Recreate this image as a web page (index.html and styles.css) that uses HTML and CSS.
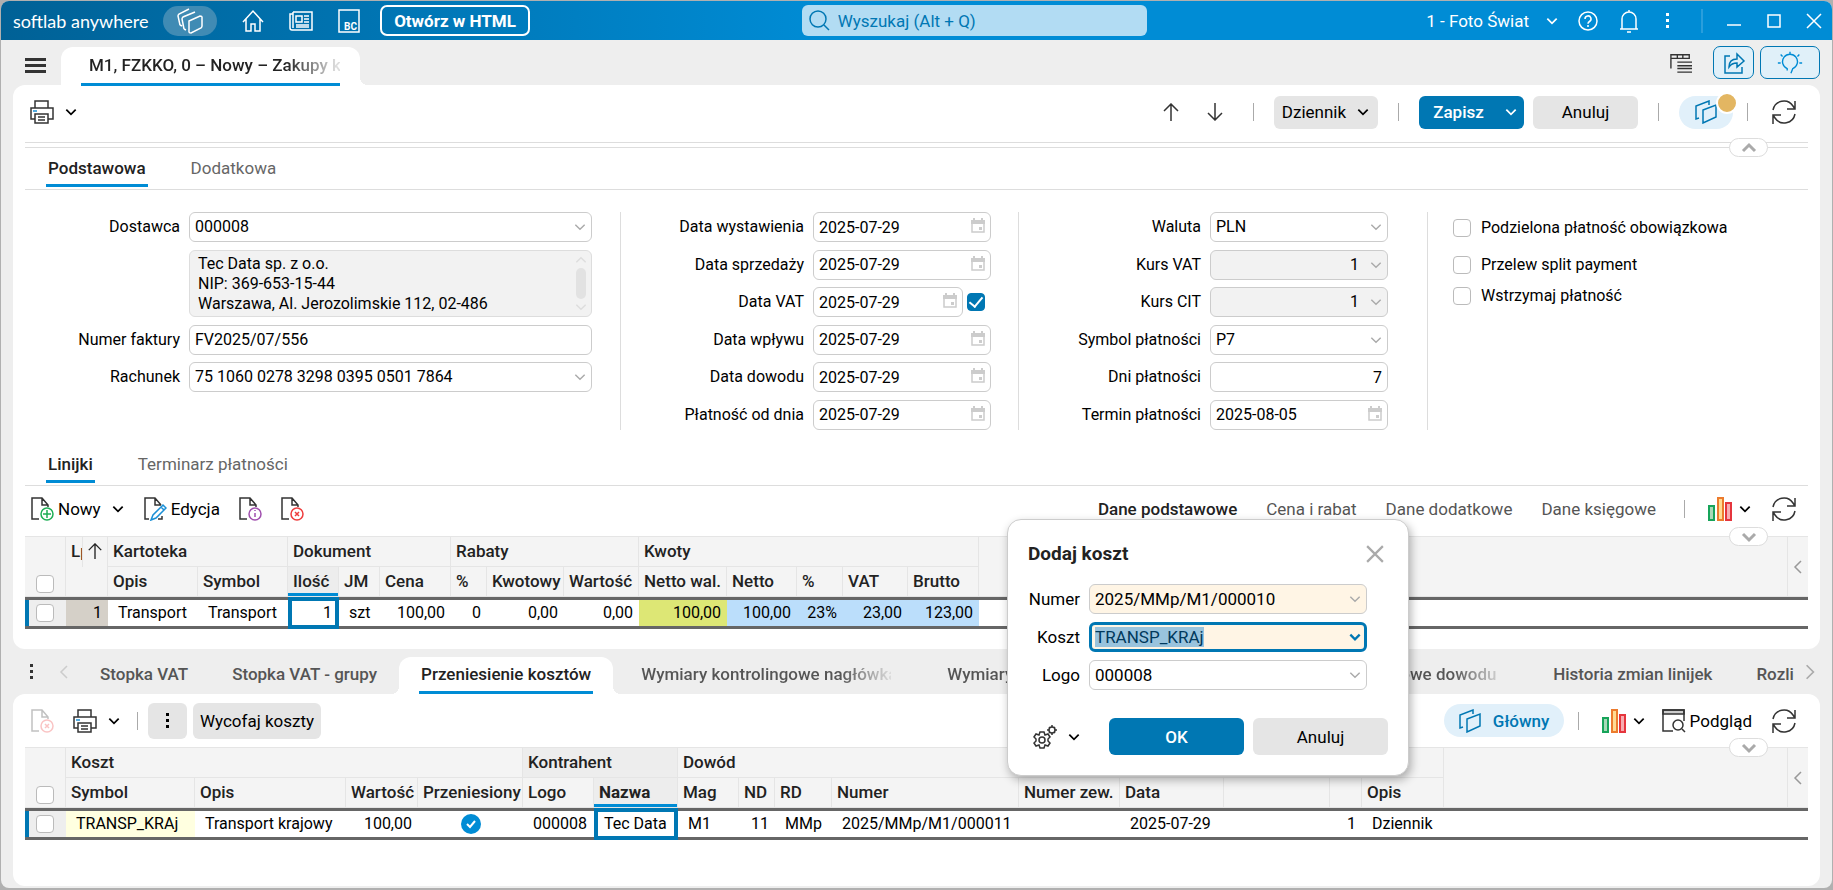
FILE: index.html
```
<!DOCTYPE html>
<html lang="pl">
<head>
  <meta charset="UTF-8" />
  <meta name="viewport" content="width=device-width, initial-scale=1.0" />
  <title>softlab anywhere</title>
  <link rel="stylesheet" href="styles.css">
</head>
<body>
  <!-- Icon set -->
  <svg class="sprite" aria-hidden="true">
    <symbol id="i-chevron" viewBox="0 0 12 12"><path d="M2 4l4 4 4-4" /></symbol>
    <symbol id="i-left" viewBox="0 0 10 16"><path d="M8 2L2 8l6 6" /></symbol>
    <symbol id="i-home" viewBox="0 0 24 24"><path d="M2 13L12 2l10 11M5 10v12h5v-7h4v7h5V10" /></symbol>
    <symbol id="i-news" viewBox="0 0 24 24"><path d="M4 3h19v18H3a2 2 0 0 1-2-2V5h3M4 3v16M7 7h6v6H7zM15 7h5M15 10h5M15 13h5M7 16h13M7 18h13" /></symbol>
    <symbol id="i-file" viewBox="0 0 24 24"><path d="M2 1h20v22H2z" /></symbol>
    <symbol id="i-stack" viewBox="0 0 26 26"><path d="M3 17l-2-9c0-1 0-1 1-2L12 1M7 21L5 11c0-1 0-1 1-2l12-5M12 13l11-5c1 0 2 0 2 1v9c0 1 0 1-1 2l-10 5c-1 0-2 0-2-1zM3 17l2 1M7 21l2 1" /></symbol>
    <symbol id="i-panes" viewBox="0 0 24 24"><path d="M5 18l-3 1V6l13-5v4M9 10l13-5v12L9 23z" /></symbol>
    <symbol id="i-search" viewBox="0 0 22 22"><circle cx="10" cy="9" r="8" /><path d="M16 15l5 5" /></symbol>
    <symbol id="i-help" viewBox="0 0 22 22"><circle cx="11" cy="11" r="9" /><path d="M8 9a3 3 0 1 1 4.500 2.500c-1 .6-1.500 1-1.500 2.200M11 15v2" /></symbol>
    <symbol id="i-bell" viewBox="0 0 22 24"><path d="M2 20h18M4 20V10a7 7 0 0 1 14 0v10M11 3V1M9 23h4" /></symbol>
    <symbol id="i-dots" viewBox="0 0 6 18"><path d="M1 1h3v3H1zM1 7h3v3H1zM1 13h3v3H1z" fill="currentColor" stroke="none" /></symbol>
    <symbol id="i-min" viewBox="0 0 16 16"><path d="M1 12h14" /></symbol>
    <symbol id="i-max" viewBox="0 0 16 16"><path d="M2 2h12v12H2z" /></symbol>
    <symbol id="i-close" viewBox="0 0 16 16"><path d="M1 1l14 14M15 1L1 15" /></symbol>
    <symbol id="i-list" viewBox="0 0 24 22"><path d="M1 17V2h20v4H1M8 2v4M14 2v4M8 10h16M8 14h16M8 17h16M8 21h16" /></symbol>
    <symbol id="i-share" viewBox="0 0 24 24"><path d="M8 5H3v17h17v-6M7 16c0-6 3-8 8-8V3l7 7-7 6v-4c-4 0-6 1-8 4z" /></symbol>
    <symbol id="i-bulb" viewBox="0 0 30 26"><path d="M12 21v-2a8 8 0 1 1 6 0l-2 5M15 1v3M5 4l2 2M25 4l-2 2M2 13h3M25 13h3" /></symbol>
    <symbol id="i-print" viewBox="0 0 24 24"><path d="M5 8V1h13v7M5 19H1V8h22v11h-5M5 14h13v9H5zM8 17h7M8 20h7" /><path class="blue" d="M3 11h4" /></symbol>
    <symbol id="i-up" viewBox="0 0 16 18"><path d="M8 18V1M1 8l7-7 7 7" /></symbol>
    <symbol id="i-down" viewBox="0 0 16 18"><path d="M8 0v17M1 10l7 7 7-7" /></symbol>
    <symbol id="i-refresh" viewBox="0 0 24 24"><path d="M1 10A11 11 0 0 1 21 6l2 3M23 1v8h-8M23 14A11 11 0 0 1 3 18l-2-3M1 24v-9h8" /></symbol>
    <symbol id="i-cal" viewBox="0 0 16 16"><path d="M2 5h12v9H2z" /><path d="M1 2h14v4H1zM3 0h2v3H3zM11 0h2v3h-2zM9 9h3v3H9z" fill="currentColor" stroke="none" /></symbol>
    <symbol id="i-page" viewBox="0 0 24 24"><path d="M9 22H2V1h10l6 7v2M12 1v7h6" /></symbol>
    <symbol id="i-new" viewBox="0 0 24 24"><use href="#i-page" /><g class="green"><circle cx="17" cy="17" r="6" /><path d="M17 13v8M13 17h8" /></g></symbol>
    <symbol id="i-info" viewBox="0 0 24 24"><use href="#i-page" /><g class="purple"><circle cx="17" cy="17" r="6" /><path d="M17 16v4M17 13v1" /></g></symbol>
    <symbol id="i-del" viewBox="0 0 24 24"><use href="#i-page" /><g class="red"><circle cx="17" cy="17" r="6" /><path d="M15 15l4 4M19 15l-4 4" /></g></symbol>
    <symbol id="i-edit" viewBox="0 0 24 24"><path d="M6 22H2V1h10l6 7M12 1v7h6M15 22h4v-3" /><path class="blue" d="M8 23l2-5L20 8l3 3-10 10zM18 10l3 3" /></symbol>
    <symbol id="i-chart" viewBox="0 0 24 24">
      <path d="M1 9h5v14H1z" fill="#a8d9b8" stroke="#17a45a" /><path d="M10 1h5v22h-5z" fill="#ffdb93" stroke="#ec7b2d" /><path d="M18 6h5v17h-5z" fill="#f7acb0" stroke="#e5353d" />
    </symbol>
    <symbol id="i-preview" viewBox="0 0 24 24"><path d="M1 1h21v4H1z" fill="#ccc" /><path d="M22 12V1H1v21h10M20 20l3 3" /><circle cx="16" cy="16" r="5" /></symbol>
    <symbol id="i-gears" viewBox="0 0 24 24">
      <circle cx="9" cy="15" r="3" /><path d="M7 7h4l1 3 3-1 2 3-2 2v2l2 2-2 3-3-1-1 3H7l-1-3-3 1-2-3 2-2v-2l-2-2 2-3 3 1z" />
      <circle cx="19" cy="5" r="3" /><path d="M19 0v2M19 8v2M14 5h2M22 5h2M16 2l1 1M21 7l1 1M22 2l-1 1M17 7l-1 1" />
    </symbol>
  </svg>

  <div class="window">
    <header class="titlebar">
      <div class="title-left">
        <span class="brand">softlab anywhere</span>
        <button class="stack-btn" aria-label="Moduły"><svg class="icon i26"><use href="#i-stack" /></svg></button>
        <button class="title-btn" aria-label="Start"><svg class="icon i24"><use href="#i-home" /></svg></button>
        <button class="title-btn" aria-label="Aktualności"><svg class="icon i24"><use href="#i-news" /></svg></button>
        <button class="title-btn bc" aria-label="BC"><svg class="icon i24"><use href="#i-file" /></svg><span>BC</span></button>
        <button class="html-btn">Otwórz w HTML</button>
      </div>
      <div class="search">
        <svg class="icon i22"><use href="#i-search" /></svg>
        <input type="text" aria-label="Wyszukaj" placeholder="Wyszukaj (Alt + Q)">
      </div>
      <div class="title-right">
        <button class="company">1 - Foto Świat <svg class="icon i14 thick"><use href="#i-chevron" /></svg></button>
        <button aria-label="Pomoc"><svg class="icon i22"><use href="#i-help" /></svg></button>
        <button aria-label="Powiadomienia"><svg class="icon i24"><use href="#i-bell" /></svg></button>
        <button class="more" aria-label="Więcej"><svg class="icon dots"><use href="#i-dots" /></svg></button>
        <span class="title-sep"></span>
        <button aria-label="Minimalizuj"><svg class="icon i16"><use href="#i-min" /></svg></button>
        <button aria-label="Maksymalizuj"><svg class="icon i16"><use href="#i-max" /></svg></button>
        <button aria-label="Zamknij"><svg class="icon i16"><use href="#i-close" /></svg></button>
      </div>
    </header>

    <nav class="docbar">
      <button class="menu-btn" aria-label="Menu"><span></span><span></span><span></span></button>
      <a class="doc-tab" href="#dokument"><span class="fade">M1, FZKKO, 0 – Nowy – Zakupy k</span></a>
      <div class="docbar-right">
        <button class="list-btn" aria-label="Lista"><svg class="icon i22"><use href="#i-list" /></svg></button>
        <button class="outline-btn" aria-label="Udostępnij"><svg class="icon i24"><use href="#i-share" /></svg></button>
        <button class="outline-btn wide" aria-label="Podpowiedzi"><svg class="icon i28"><use href="#i-bulb" /></svg></button>
      </div>
    </nav>

    <main class="panel" id="dokument">
      <div class="toolbar main-tools">
        <button class="tool" aria-label="Drukuj"><svg class="icon i24"><use href="#i-print" /></svg><svg class="icon i14 thick"><use href="#i-chevron" /></svg></button>
        <div class="right">
          <div class="arrows">
            <button aria-label="Poprzedni"><svg class="icon i18"><use href="#i-up" /></svg></button>
            <button aria-label="Następny"><svg class="icon i18"><use href="#i-down" /></svg></button>
          </div>
          <span class="sep"></span>
          <button class="btn journal">Dziennik <svg class="icon i14 thick"><use href="#i-chevron" /></svg></button>
          <span class="sep"></span>
          <div class="save-group">
            <button class="btn primary">Zapisz <svg class="icon i14 thick"><use href="#i-chevron" /></svg></button>
            <button class="btn">Anuluj</button>
          </div>
          <span class="sep"></span>
          <button class="pill badge" aria-label="Widok"><svg class="icon i24"><use href="#i-panes" /></svg></button>
          <span class="sep"></span>
          <button class="refresh" aria-label="Odśwież"><svg class="icon i24"><use href="#i-refresh" /></svg></button>
        </div>
      </div>
      <div class="divider"><button class="fold up" aria-label="Zwiń"><svg class="icon i18"><use href="#i-chevron" /></svg></button></div>

      <nav class="tabs">
        <a class="tab active" href="#podstawowa">Podstawowa</a>
        <a class="tab" href="#dodatkowa">Dodatkowa</a>
      </nav>

      <form class="form" id="podstawowa">
        <div class="fields supplier">
          <label for="dostawca">Dostawca</label>
          <div class="field"><select id="dostawca"><option>000008</option></select><svg class="icon i14"><use href="#i-chevron" /></svg></div>
          <label class="address-label" for="adres"></label>
          <div class="address field">
            <textarea id="adres" aria-label="Adres dostawcy" readonly>Tec Data sp. z o.o.
NIP: 369-653-15-44
Warszawa, Al. Jerozolimskie 112, 02-486</textarea>
            <div class="scroll"><svg class="icon i14 flip"><use href="#i-chevron" /></svg><span></span><svg class="icon i14"><use href="#i-chevron" /></svg></div>
          </div>
          <label for="faktura">Numer faktury</label>
          <div class="field"><input type="text" id="faktura" value="FV2025/07/556"></div>
          <label for="rachunek">Rachunek</label>
          <div class="field"><select id="rachunek"><option>75 1060 0278 3298 0395 0501 7864</option></select><svg class="icon i14"><use href="#i-chevron" /></svg></div>
        </div>

        <div class="fields dates">
          <label for="wystawienie">Data wystawienia</label>
          <div class="field"><input type="text" id="wystawienie" value="2025-07-29"><svg class="icon i16"><use href="#i-cal" /></svg></div>
          <label for="sprzedaz">Data sprzedaży</label>
          <div class="field"><input type="text" id="sprzedaz" value="2025-07-29"><svg class="icon i16"><use href="#i-cal" /></svg></div>
          <label for="vat">Data VAT</label>
          <div class="with-check">
            <div class="field"><input type="text" id="vat" value="2025-07-29"><svg class="icon i16"><use href="#i-cal" /></svg></div>
            <input type="checkbox" class="check" aria-label="Data VAT" checked>
          </div>
          <label for="wplyw">Data wpływu</label>
          <div class="field"><input type="text" id="wplyw" value="2025-07-29"><svg class="icon i16"><use href="#i-cal" /></svg></div>
          <label for="dowod">Data dowodu</label>
          <div class="field"><input type="text" id="dowod" value="2025-07-29"><svg class="icon i16"><use href="#i-cal" /></svg></div>
          <label for="oddnia">Płatność od dnia</label>
          <div class="field"><input type="text" id="oddnia" value="2025-07-29"><svg class="icon i16"><use href="#i-cal" /></svg></div>
        </div>

        <div class="fields payment">
          <label for="waluta">Waluta</label>
          <div class="field"><select id="waluta"><option>PLN</option></select><svg class="icon i14"><use href="#i-chevron" /></svg></div>
          <label for="kursvat">Kurs VAT</label>
          <div class="field"><select id="kursvat" class="num" disabled><option>1</option></select><svg class="icon i14"><use href="#i-chevron" /></svg></div>
          <label for="kurscit">Kurs CIT</label>
          <div class="field"><select id="kurscit" class="num" disabled><option>1</option></select><svg class="icon i14"><use href="#i-chevron" /></svg></div>
          <label for="symbol">Symbol płatności</label>
          <div class="field"><select id="symbol"><option>P7</option></select><svg class="icon i14"><use href="#i-chevron" /></svg></div>
          <label for="dni">Dni płatności</label>
          <div class="field"><input type="text" id="dni" class="num" value="7"></div>
          <label for="termin">Termin płatności</label>
          <div class="field"><input type="text" id="termin" value="2025-08-05"><svg class="icon i16"><use href="#i-cal" /></svg></div>
        </div>

        <div class="options">
          <label class="first"><input type="checkbox" class="check"> Podzielona płatność obowiązkowa</label>
          <label><input type="checkbox" class="check"> Przelew split payment</label>
          <label><input type="checkbox" class="check"> Wstrzymaj płatność</label>
        </div>
      </form>

      <nav class="tabs lines-tabs">
        <a class="tab active" href="#linijki">Linijki</a>
        <a class="tab" href="#terminarz">Terminarz płatności</a>
      </nav>

      <div class="toolbar line-tools" id="linijki">
        <button class="tool"><svg class="icon i24"><use href="#i-new" /></svg>Nowy<svg class="icon i14 thick"><use href="#i-chevron" /></svg></button>
        <button class="tool"><svg class="icon i24"><use href="#i-edit" /></svg>Edycja</button>
        <button class="tool" aria-label="Informacje"><svg class="icon i24"><use href="#i-info" /></svg></button>
        <button class="tool" aria-label="Usuń"><svg class="icon i24"><use href="#i-del" /></svg></button>
        <div class="right">
          <div class="views">
            <a class="active" href="#podstawowe">Dane podstawowe</a>
            <a href="#cena">Cena i rabat</a>
            <a href="#dodatkowe">Dane dodatkowe</a>
            <a href="#ksiegowe">Dane księgowe</a>
          </div>
          <span class="sep"></span>
          <button class="tool tight" aria-label="Wykres"><svg class="icon i24 chart"><use href="#i-chart" /></svg><svg class="icon i14 thick"><use href="#i-chevron" /></svg></button>
          <button class="refresh" aria-label="Odśwież"><svg class="icon i24"><use href="#i-refresh" /></svg></button>
        </div>
      </div>

      <div class="grid">
        <button class="fold" aria-label="Rozwiń"><svg class="icon i18"><use href="#i-chevron" /></svg></button>
        <table class="lines">
          <colgroup>
            <col class="c-check"><col class="c-lp"><col class="c-sort"><col class="c-opis"><col class="c-opis"><col class="c-ilosc"><col class="c-jm"><col class="c-cena"><col class="c-pct"><col class="c-kwot"><col class="c-wart"><col class="c-nwal"><col class="c-netto"><col class="c-stawka"><col class="c-vat"><col class="c-brutto"><col><col class="c-end">
          </colgroup>
          <thead>
            <tr>
              <th rowspan="2" class="pick"><input type="checkbox" class="check" aria-label="Zaznacz wszystkie"></th>
              <th class="lp">Lp</th>
              <th class="sort"><svg class="icon i16"><use href="#i-up" /></svg></th>
              <th colspan="2">Kartoteka</th>
              <th colspan="3">Dokument</th>
              <th colspan="3">Rabaty</th>
              <th colspan="5">Kwoty</th>
              <th rowspan="2"></th>
              <th rowspan="2" class="end"><button aria-label="Panel boczny"><svg class="icon i16"><use href="#i-left" /></svg></button></th>
            </tr>
            <tr>
              <th colspan="2"></th>
              <th>Opis</th>
              <th>Symbol</th>
              <th class="current">Ilość</th>
              <th>JM</th>
              <th>Cena</th>
              <th>%</th>
              <th>Kwotowy</th>
              <th>Wartość</th>
              <th>Netto wal.</th>
              <th>Netto</th>
              <th>%</th>
              <th>VAT</th>
              <th>Brutto</th>
            </tr>
          </thead>
          <tbody>
            <tr>
              <td class="pick"><input type="checkbox" class="check" aria-label="Zaznacz wiersz"></td>
              <td colspan="2" class="num beige">1</td>
              <td>Transport</td>
              <td>Transport</td>
              <td class="num cell-focus">1</td>
              <td>szt</td>
              <td class="num">100,00</td>
              <td class="num">0</td>
              <td class="num">0,00</td>
              <td class="num">0,00</td>
              <td class="num lime">100,00</td>
              <td class="num sky">100,00</td>
              <td class="num sky">23%</td>
              <td class="num sky">23,00</td>
              <td class="num sky">123,00</td>
              <td></td>
              <td></td>
            </tr>
          </tbody>
        </table>
      </div>
    </main>

    <nav class="bottom-tabs">
      <button class="more" aria-label="Lista zakładek"><svg class="icon dots"><use href="#i-dots" /></svg></button>
      <button class="prev" aria-label="Wstecz"><svg class="icon i16"><use href="#i-left" /></svg></button>
      <div class="strip">
        <a href="#stopka">Stopka VAT</a>
        <a href="#grupy">Stopka VAT - grupy</a>
        <a class="active" href="#koszty"><span>Przeniesienie kosztów</span></a>
        <a class="long" href="#naglowek"><span class="fade">Wymiary kontrolingowe nagłówka</span></a>
        <a class="long" href="#linijek"><span class="fade">Wymiary kontrolingowe linijek</span></a>
        <a class="long" href="#dowodu"><span class="fade">Wymiary kontrolingowe dowodu</span></a>
        <a href="#historia">Historia zmian linijek</a>
        <a href="#rozliczenia">Rozliczenia</a>
      </div>
      <button class="next" aria-label="Dalej"><svg class="icon i18 mirror"><use href="#i-left" /></svg></button>
    </nav>

    <section class="panel bottom" id="koszty">
      <div class="toolbar cost-tools">
        <button class="tool" aria-label="Usuń" disabled><svg class="icon i24"><use href="#i-del" /></svg></button>
        <button class="tool" aria-label="Drukuj"><svg class="icon i24"><use href="#i-print" /></svg><svg class="icon i14 thick"><use href="#i-chevron" /></svg></button>
        <span class="sep"></span>
        <div class="btns">
          <button class="btn square" aria-label="Więcej"><svg class="icon dots"><use href="#i-dots" /></svg></button>
          <button class="btn withdraw">Wycofaj koszty</button>
        </div>
        <div class="right">
          <button class="pill main-view"><svg class="icon i24"><use href="#i-panes" /></svg>Główny</button>
          <span class="sep"></span>
          <button class="tool tight" aria-label="Wykres"><svg class="icon i24 chart"><use href="#i-chart" /></svg><svg class="icon i14 thick"><use href="#i-chevron" /></svg></button>
          <button class="tool preview"><svg class="icon i24"><use href="#i-preview" /></svg>Podgląd</button>
          <button class="refresh" aria-label="Odśwież"><svg class="icon i24"><use href="#i-refresh" /></svg></button>
        </div>
      </div>

      <div class="grid">
        <button class="fold" aria-label="Rozwiń"><svg class="icon i18"><use href="#i-chevron" /></svg></button>
        <table class="costs">
          <colgroup>
            <col class="c-check"><col class="k-symbol"><col class="k-opis"><col class="k-wart"><col class="k-przen"><col class="k-logo"><col class="k-nazwa"><col class="k-mag"><col class="k-nd"><col class="k-rd"><col class="k-numer"><col class="k-zew"><col class="k-data"><col class="k-blank"><col class="k-poz"><col class="k-dopis"><col><col class="c-end">
          </colgroup>
          <thead>
            <tr>
              <th rowspan="2" class="pick"><input type="checkbox" class="check" aria-label="Zaznacz wszystkie"></th>
              <th colspan="4">Koszt</th>
              <th colspan="2" class="shade">Kontrahent</th>
              <th colspan="9">Dowód</th>
              <th rowspan="2"></th>
              <th rowspan="2" class="end"><button aria-label="Panel boczny"><svg class="icon i16"><use href="#i-left" /></svg></button></th>
            </tr>
            <tr>
              <th>Symbol</th>
              <th>Opis</th>
              <th>Wartość</th>
              <th>Przeniesiony</th>
              <th>Logo</th>
              <th class="current strong">Nazwa</th>
              <th>Mag</th>
              <th>ND</th>
              <th>RD</th>
              <th>Numer</th>
              <th>Numer zew.</th>
              <th>Data</th>
              <th></th>
              <th></th>
              <th>Opis</th>
            </tr>
          </thead>
          <tbody>
            <tr>
              <td class="pick"><input type="checkbox" class="check" aria-label="Zaznacz wiersz"></td>
              <td class="cream">TRANSP_KRAj</td>
              <td>Transport krajowy</td>
              <td class="num">100,00</td>
              <td class="mid"><svg class="ok" viewBox="0 0 20 20"><circle cx="10" cy="10" r="10" /><path d="M6 10l3 3 5-6" /></svg></td>
              <td>000008</td>
              <td class="cell-focus">Tec Data</td>
              <td>M1</td>
              <td class="num">11</td>
              <td>MMp</td>
              <td>2025/MMp/M1/000011</td>
              <td></td>
              <td>2025-07-29</td>
              <td></td>
              <td class="num">1</td>
              <td>Dziennik</td>
              <td></td>
              <td></td>
            </tr>
          </tbody>
        </table>
      </div>
    </section>
  </div>

  <div class="dialog" role="dialog" aria-labelledby="dialog-title">
    <div class="dialog-head">
      <h2 id="dialog-title">Dodaj koszt</h2>
      <button aria-label="Zamknij"><svg class="icon i18"><use href="#i-close" /></svg></button>
    </div>
    <div class="dialog-fields">
      <label for="d-numer">Numer</label>
      <div class="field warm"><select id="d-numer"><option>2025/MMp/M1/000010</option></select><svg class="icon i14"><use href="#i-chevron" /></svg></div>
      <label for="d-koszt">Koszt</label>
      <div class="field warm focus"><input type="text" id="d-koszt" value="TRANSP_KRAj"><svg class="icon i14"><use href="#i-chevron" /></svg></div>
      <label for="d-logo">Logo</label>
      <div class="field"><select id="d-logo"><option>000008</option></select><svg class="icon i14"><use href="#i-chevron" /></svg></div>
    </div>
    <div class="dialog-foot">
      <button class="tool" aria-label="Ustawienia"><svg class="icon i24"><use href="#i-gears" /></svg><svg class="icon i14 thick"><use href="#i-chevron" /></svg></button>
      <button class="btn primary">OK</button>
      <button class="btn">Anuluj</button>
    </div>
  </div>

  <script>
    // start with the cost symbol selected
    document.getElementById('d-koszt').select();
  </script>
</body>
</html>
```

FILE: styles.css
```
* {
  box-sizing: border-box;
}
body {
  margin: 0;
  padding: 1px 1px 2px;
  min-height: 100vh;
  display: flex;
  background: #b0b0b0;
  font-family: Roboto, "Noto Sans", sans-serif;
  font-size: 17px;
  line-height: 20px;
  color: #000;
}
button, input, select, textarea {
  font: inherit;
  color: inherit;
}
button {
  display: flex;
  align-items: center;
  justify-content: center;
  padding: 0;
  border: 0;
  background: none;
  white-space: nowrap;
  cursor: pointer;
}
a {
  color: inherit;
  text-decoration: none;
  white-space: nowrap;
}

/* icons */
.sprite {
  position: absolute;
  width: 0;
  height: 0;
}
.icon {
  flex: none;
  fill: none;
  stroke: currentColor;
  stroke-width: 1.5;
}
.i14 { width: 14px; height: 14px; stroke-width: 1.2; }
.i16 { width: 16px; height: 16px; }
.i18 { width: 18px; height: 18px; }
.i22 { width: 22px; height: 22px; }
.i24 { width: 24px; height: 24px; }
.i26 { width: 26px; height: 26px; }
.i28 { width: 28px; height: 26px; }
.dots { width: 6px; height: 18px; }
.thick { stroke-width: 1.5; }
.flip { transform: rotate(180deg); }
.mirror { transform: scaleX(-1); }
.blue { stroke: #1a8fd6; }
.green { stroke: #1cae54; }
.purple { stroke: #a04fae; }
.red { stroke: #ee3d3d; }

.window {
  flex: 1;
  min-width: 0;
  display: flex;
  flex-direction: column;
  background: #eee;
  border-radius: 8px;
  overflow: hidden;
}

/* title bar */
.titlebar {
  display: flex;
  align-items: center;
  height: 39px;
  padding: 0 7px 0 12px;
  background: linear-gradient(90deg, #006196, #008cd5 45%);
  color: #fff;
}
.title-left {
  display: flex;
  align-items: center;
}
.brand {
  font-family: Lato, sans-serif;
  font-size: 18px;
  width: 150px;
  white-space: nowrap;
}
.stack-btn {
  width: 54px;
  height: 30px;
  border-radius: 15px;
  background: #408bb4;
  margin-right: 12px;
}
.title-btn {
  width: 48px;
  height: 30px;
}
.bc {
  position: relative;
}
.bc span {
  position: absolute;
  right: 16px;
  bottom: 4px;
  font-size: 10px;
  line-height: 11px;
  font-weight: 700;
}
.html-btn {
  width: 150px;
  height: 31px;
  margin-left: 7px;
  border: 2px solid #fff;
  border-radius: 7px;
  font-weight: 700;
}
.search {
  display: flex;
  align-items: center;
  gap: 6px;
  width: 345px;
  height: 31px;
  margin: 0 auto;
  padding: 0 6px;
  border-radius: 6px;
  background: #b2dcf3;
  color: #0077b3;
}
.search input {
  flex: 1;
  min-width: 0;
  border: 0;
  outline: 0;
  background: none;
}
.search input::placeholder {
  color: #0077b3;
}
.title-right {
  display: flex;
  align-items: center;
  gap: 18px;
  padding-left: 8px;
}
.company {
  gap: 16px;
}
.title-right .more {
  margin-left: 6px;
}
.title-sep {
  width: 2px;
  height: 24px;
  margin: 0 2px 0 12px;
  background: #2a9edc;
}
.title-right .i16 {
  margin: 0 3px;
}

/* open documents */
.docbar {
  display: flex;
  align-items: flex-end;
  height: 45px;
  padding: 0 12px 0 24px;
}
.menu-btn {
  flex-direction: column;
  gap: 3px;
  width: 21px;
  margin-bottom: 12px;
}
.menu-btn span {
  width: 21px;
  height: 3px;
  background: #333;
}
.doc-tab {
  position: relative;
  height: 38px;
  margin-left: 15px;
  padding: 0 20px;
  border-radius: 12px 12px 0 0;
  background: #fff;
  font-weight: 500;
  color: #222;
}
.doc-tab::after,
.strip .active::after,
.strip .active::before {
  content: "";
  position: absolute;
  left: 100%;
  bottom: 0;
  width: 8px;
  height: 8px;
  background: radial-gradient(circle at 100% 0, transparent 8px, #fff 8px);
}
.doc-tab .fade {
  display: block;
  width: 259px;
  padding: 8px 8px;
  border-bottom: 3px solid #008cd5;
  overflow: hidden;
  background: linear-gradient(90deg, #222 205px, #ddd 255px);
  background-clip: text;
  color: transparent;
}
.docbar-right {
  display: flex;
  align-items: center;
  gap: 6px;
  height: 45px;
  margin-left: auto;
}
.list-btn {
  color: #333;
  margin-right: 15px;
}
.outline-btn {
  width: 41px;
  height: 33px;
  border: 1px solid #0077b3;
  border-radius: 7px;
  background: #e0f0f9;
  color: #0077b3;
}
.outline-btn.wide {
  width: 60px;
  color: #008cd5;
}

.panel {
  margin: 0 12px;
  padding: 0 12px 20px;
  border-radius: 12px;
  background: #fff;
}
.bottom {
  flex: 1;
  margin-bottom: 2px;
}

/* toolbars */
.toolbar {
  display: flex;
  align-items: center;
  padding: 0 12px 0 5px;
}
.main-tools {
  height: 57px;
  padding-bottom: 3px;
}
.line-tools {
  height: 50px;
  padding-bottom: 4px;
  gap: 18px;
}
.cost-tools {
  height: 53px;
  gap: 19px;
}
.right {
  display: flex;
  align-items: center;
  margin-left: auto;
}
.tool {
  gap: 4px;
}
.tool .i24 {
  color: #333;
}
.tool .thick {
  margin-left: 6px;
}
.tool:disabled {
  opacity: 0.3;
}
.sep {
  width: 1px;
  height: 18px;
  margin: 0 20px;
  background: #aaa;
}
.line-tools .sep {
  margin: 0 23px 0 28px;
}
.cost-tools > .sep {
  margin: 0 -9px 0 -3px;
}
.cost-tools .right .sep {
  margin: 0 23px 0 14px;
}
.arrows {
  display: flex;
  gap: 26px;
  margin-right: 9px;
  color: #333;
}
.btn {
  height: 33px;
  border-radius: 6px;
  background: #e5e5e5;
}
.journal {
  width: 104px;
  gap: 10px;
}
.save-group {
  display: flex;
  gap: 9px;
}
.save-group .btn {
  width: 105px;
}
.save-group .primary {
  gap: 20px;
  padding-left: 8px;
}
.primary {
  background: #0077b3;
  color: #fff;
  font-weight: 500;
}
.pill {
  position: relative;
  width: 54px;
  height: 33px;
  border-radius: 17px;
  background: #e1f0fa;
  color: #0077b3;
}
.badge {
  margin-right: -6px;
}
.badge::after {
  content: "";
  position: absolute;
  top: -4px;
  right: -5px;
  width: 18px;
  height: 18px;
  border: 2px solid #fff;
  border-radius: 50%;
  background: #e3b662;
}
.refresh {
  color: #333;
  margin-left: 4px;
}
.line-tools .refresh,
.cost-tools .refresh {
  margin-left: 20px;
}
.tight {
  gap: 0;
}
.chart {
  stroke-width: 2;
}
.views {
  display: flex;
  gap: 29px;
  color: #555;
}
.views .active {
  font-weight: 500;
  color: #222;
}
.btns {
  display: flex;
  gap: 6px;
}
.btns .btn {
  height: 36px;
}
.btns .square {
  width: 39px;
}
.withdraw {
  width: 128px;
}
.main-view {
  width: 120px;
  gap: 11px;
  font-weight: 500;
}
.preview {
  margin-left: 16px;
}

.divider {
  position: relative;
  height: 6px;
  border: solid #ddd;
  border-width: 1px 0;
}
.fold {
  position: absolute;
  right: 40px;
  top: -9px;
  width: 39px;
  height: 19px;
  border: 1px solid #ddd;
  border-radius: 10px;
  background: #fff;
  color: #aaa;
}
.fold .icon {
  stroke-width: 2;
}
.fold.up {
  top: -5px;
}
.fold.up .icon {
  transform: rotate(180deg);
}

/* tabs inside a panel */
.tabs {
  display: flex;
  gap: 41px;
  height: 42px;
  padding: 0 21px;
  border-bottom: 1px solid #ddd;
  color: #666;
}
.tab {
  height: 39px;
  padding: 10px 2px 0;
}
.tab.active {
  border-bottom: 3px solid #008cd5;
  font-weight: 500;
  color: #222;
}
.lines-tabs {
  margin-top: 14px;
}

/* form */
.form {
  display: grid;
  grid-template-columns: 596fr 398fr 409fr 380fr;
  padding-top: 22px;
  font-size: 16px;
}
.fields {
  display: grid;
  grid-template-columns: 155px minmax(0, 1fr);
  grid-template-rows: repeat(6, 30px);
  align-content: space-between;
  align-items: center;
  column-gap: 9px;
  height: 218px;
  padding-right: 28px;
  border-right: 1px solid #ddd;
}
.fields label,
.dialog-fields label {
  text-align: right;
  white-space: nowrap;
}
.fields.dates {
  grid-template-columns: 183px minmax(0, 1fr);
  padding-right: 27px;
}
.fields.payment {
  grid-template-columns: 182px minmax(0, 1fr);
  padding-right: 39px;
}
.field {
  position: relative;
  flex: 1;
  min-width: 0;
  height: 30px;
}
.field input,
.field select,
.field textarea {
  display: block;
  width: 100%;
  height: 100%;
  padding: 0 5px;
  border: 1px solid #ccc;
  border-radius: 6px;
  outline: 0;
  background: #fff;
  appearance: none;
  opacity: 1;
}
.field .num {
  text-align: right;
}
.field select.num {
  padding-right: 28px;
  text-align-last: right;
}
.field select:disabled {
  background: #f2f2f2;
}
.field > .icon {
  position: absolute;
  right: 5px;
  top: 8px;
  color: #aaa;
  pointer-events: none;
}
.field > .i16 {
  top: 6px;
  color: #ccc;
}
.address,
.address-label {
  grid-row: span 2;
}
.address.field {
  align-self: stretch;
  height: auto;
}
.field textarea {
  padding: 3px 8px;
  border-color: #ddd;
  background: #f2f2f2;
  resize: none;
  overflow: hidden;
}
.scroll {
  position: absolute;
  top: 3px;
  right: 4px;
  bottom: 3px;
  display: flex;
  flex-direction: column;
  align-items: center;
  color: #ddd;
}
.scroll span {
  flex: 1;
  width: 10px;
  margin: 1px 0;
  border-radius: 5px;
  background: #e2e2e2;
}
.with-check {
  display: flex;
  align-items: center;
  gap: 4px;
}
.with-check .check {
  margin-right: 6px;
}
.check {
  flex: none;
  width: 18px;
  height: 18px;
  margin: 0;
  border: 1px solid #bbb;
  border-radius: 4px;
  background: #fff;
  appearance: none;
}
.check:checked {
  border-color: #0077b3;
  background: #0077b3;
  display: grid;
  place-items: center;
}
.check:checked::after {
  content: "";
  width: 6px;
  height: 11px;
  margin-bottom: 3px;
  border: solid #fff;
  border-width: 0 2px 2px 0;
  transform: rotate(40deg);
}
.options {
  display: flex;
  flex-direction: column;
  gap: 11px;
  padding: 6px 0 0 25px;
}
.options label {
  display: flex;
  align-items: center;
  gap: 10px;
  white-space: nowrap;
}
.options .first {
  margin-bottom: 6px;
}

/* data grids */
.grid {
  position: relative;
}
table {
  width: 100%;
  table-layout: fixed;
  border-spacing: 0;
  border-top: 1px solid #e5e5e5;
}
th, td {
  padding: 0;
  overflow: hidden;
  white-space: nowrap;
  text-align: left;
}
th {
  height: 30px;
  padding: 0 0 2px 5px;
  border-right: 1px solid #e5e5e5;
  border-bottom: 1px solid #e5e5e5;
  background: #f4f4f4;
  font-weight: 500;
  color: #222;
}
.strong {
  font-weight: 700;
}
td {
  height: 32px;
  padding: 0 0 0 10px;
  border: solid #666;
  border-width: 3px 0;
  font-size: 16px;
}
td.num {
  padding: 0 6px 0 0;
  text-align: right;
}
th.pick {
  padding: 0 0 3px 11px;
  vertical-align: bottom;
}
td.pick {
  padding-left: 11px;
  background: #eee;
  box-shadow: inset 4px 0 #0077b3;
}
.pick .check {
  display: block;
}
th.lp, th.sort {
  border-bottom: 0;
}
th.sort {
  padding-left: 4px;
  vertical-align: middle;
}
.sort .icon {
  display: block;
}
th.end {
  padding: 0 0 0 2px;
  border-right: 0;
  color: #999;
}
th.current {
  background: #ededed;
  box-shadow: inset 0 -3px #008cd5;
}
th.shade {
  background: #ededed;
}
td.cell-focus {
  border: 3px solid #0077b3;
  box-shadow: inset 0 0 0 1px #0077b3;
  padding-left: 7px;
}
td.num.cell-focus {
  padding: 0 4px 0 0;
}
td.mid {
  padding: 0;
}
.ok {
  display: block;
  width: 20px;
  height: 20px;
  margin: 0 auto;
  fill: #008cd5;
}
.ok path {
  fill: none;
  stroke: #fff;
  stroke-width: 2;
}
.beige { background: #d5d0c8; }
.lime { background: #dde775; }
.sky { background: #bbdefb; }
.cream { background: #ffffe0; }

.c-check { width: 41px; }
.c-lp { width: 17px; }
.c-sort { width: 25px; }
.c-opis { width: 90px; }
.c-ilosc { width: 51px; }
.c-jm { width: 41px; }
.c-cena { width: 71px; }
.c-pct { width: 36px; }
.c-kwot { width: 77px; }
.c-wart { width: 75px; }
.c-nwal { width: 88px; }
.c-netto { width: 70px; }
.c-stawka { width: 46px; }
.c-vat { width: 65px; }
.c-brutto { width: 71px; }
.c-end { width: 20px; }

.k-symbol { width: 129px; }
.k-opis { width: 151px; }
.k-wart { width: 72px; }
.k-przen { width: 105px; }
.k-logo { width: 71px; }
.k-nazwa { width: 84px; }
.k-mag { width: 61px; }
.k-nd { width: 36px; }
.k-rd { width: 57px; }
.k-numer { width: 187px; }
.k-zew { width: 101px; }
.k-data { width: 104px; }
.k-blank { width: 106px; }
.k-poz { width: 32px; }
.k-dopis { width: 82px; }

/* lower tab strip */
.bottom-tabs {
  display: flex;
  align-items: center;
  height: 45px;
  padding: 0 13px 0 28px;
  color: #333;
}
.bottom-tabs .prev {
  margin-left: 21px;
  color: #ccc;
}
.bottom-tabs .next {
  color: #aaa;
}
.strip {
  flex: 1;
  display: flex;
  align-items: flex-end;
  height: 45px;
  margin: 0 7px 0 6px;
  overflow: hidden;
  color: #555;
  font-weight: 500;
}
.strip a {
  flex: none;
  height: 37px;
  padding: 7px 22px;
}
.strip .long {
  padding: 7px 28px;
}
.strip .fade {
  display: block;
  width: 250px;
  overflow: hidden;
  background: linear-gradient(90deg, #555 200px, #ddd 250px);
  background-clip: text;
  color: transparent;
}
.strip .active {
  position: relative;
  padding: 0 20px;
  border-radius: 12px 12px 0 0;
  background: #fff;
  color: #222;
}
.strip .active span {
  display: block;
  height: 37px;
  padding: 7px 2px;
  border-bottom: 3px solid #008cd5;
}
.strip .active::before {
  left: auto;
  right: 100%;
  background: radial-gradient(circle at 0 0, transparent 8px, #fff 8px);
}

/* dialog */
.dialog {
  position: absolute;
  left: 1007px;
  top: 519px;
  width: 402px;
  padding: 22px 20px 20px 20px;
  border: 1px solid #ccc;
  border-radius: 14px;
  background: #fff;
  box-shadow: 2px 4px 10px rgba(0, 0, 0, 0.3);
}
.dialog-head {
  display: flex;
  align-items: center;
  justify-content: space-between;
  padding-right: 4px;
  color: #aaa;
}
.dialog-head h2 {
  margin: 0;
  font-size: 19px;
  line-height: 24px;
  font-weight: 700;
  color: #222;
}
.dialog-head .icon {
  stroke-width: 2;
}
.dialog-fields {
  display: grid;
  grid-template-columns: 52px minmax(0, 1fr);
  align-items: center;
  gap: 8px 9px;
  padding: 18px 21px 0 0;
}
.warm input,
.warm select {
  background: #fff5e5;
}
.field.focus input {
  padding: 0 3px;
  border: 3px solid #0077b3;
}
.field.focus .icon {
  color: #0077b3;
  stroke-width: 2;
}
.focus input::selection {
  background: #99c3dd;
  color: #00385c;
}
.dialog-foot {
  display: flex;
  align-items: center;
  gap: 9px;
  margin-top: 28px;
}
.dialog-foot .tool {
  margin: 0 auto 0 5px;
}
.dialog-foot .btn {
  width: 135px;
  height: 37px;
}
```
